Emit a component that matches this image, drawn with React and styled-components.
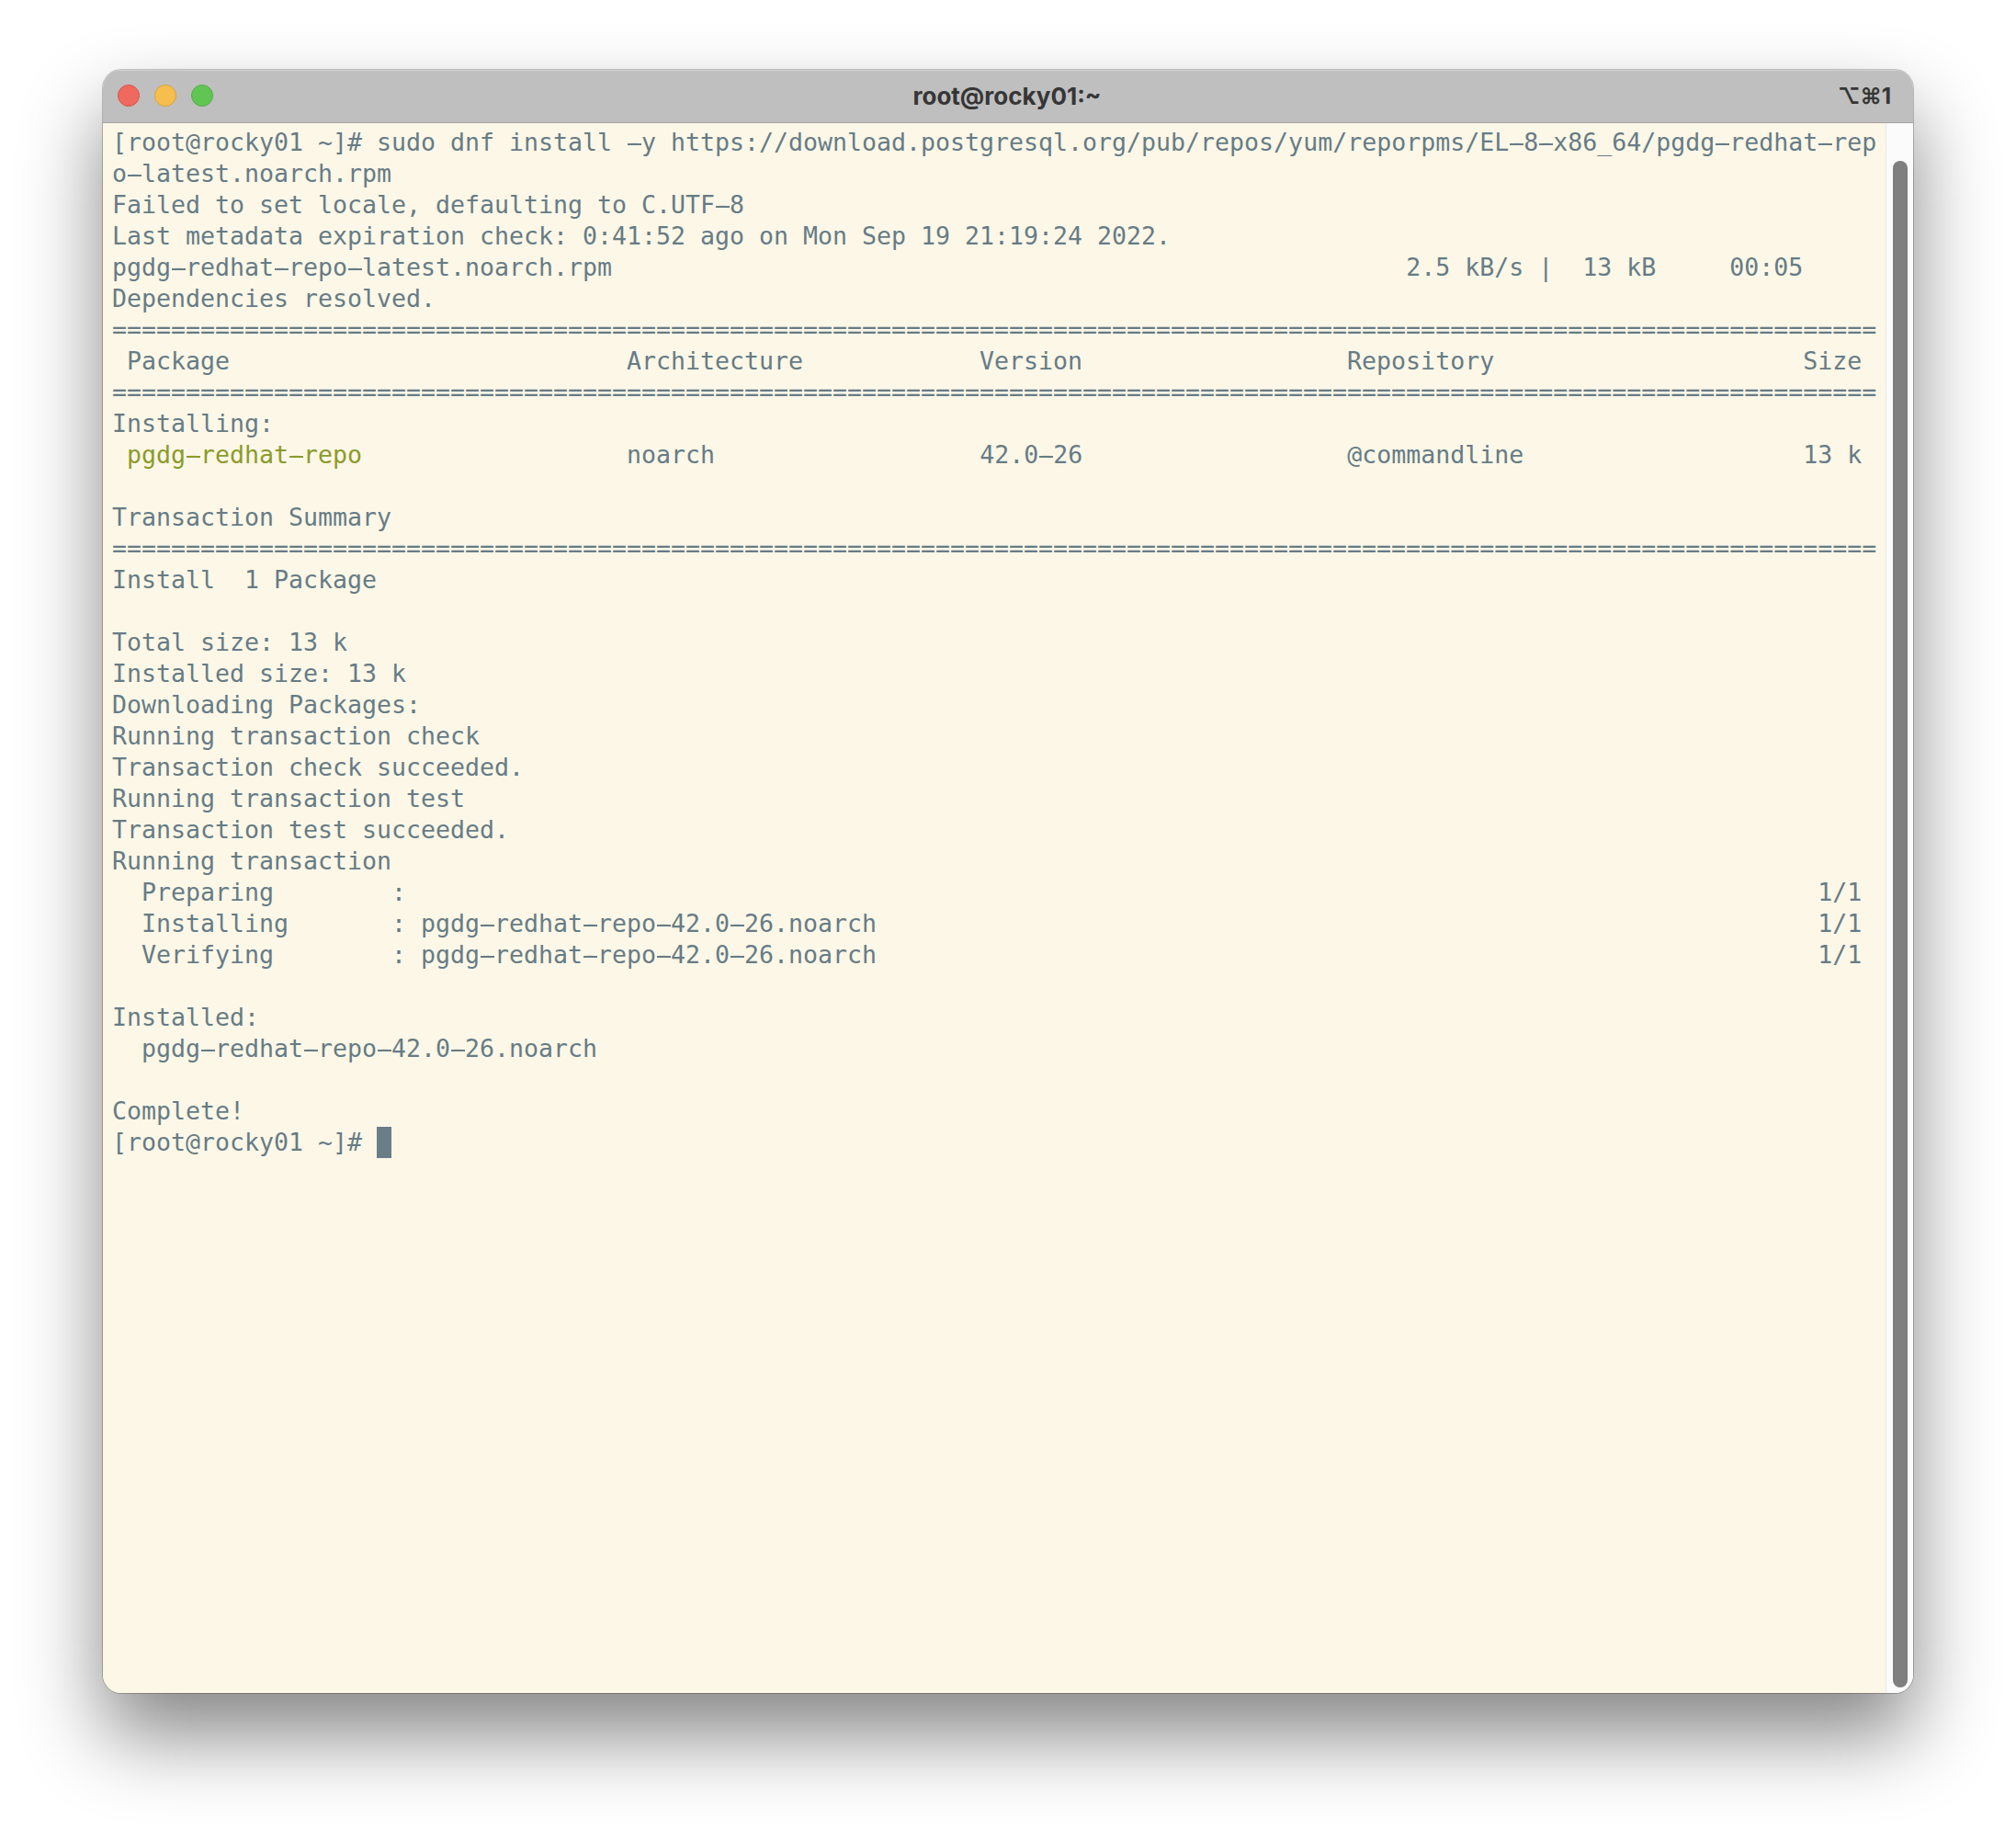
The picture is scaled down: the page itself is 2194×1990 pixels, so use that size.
import React from "react";
import styled, { createGlobalStyle } from "styled-components";

const Global = createGlobalStyle`
  html, body { margin: 0; padding: 0; background: #ffffff; }
`;

const Page = styled.div`
  width: 2194px;
  height: 1990px;
  box-sizing: border-box;
  padding: 76px 112px 0 112px;
  overflow: hidden;
`;

const Window = styled.div`
  width: 1970px;
  height: 1766px;
  display: flex;
  flex-direction: column;
  border-radius: 20px;
  overflow: hidden;
  box-shadow: 0 0 0 1px rgba(0, 0, 0, 0.22), 0 46px 88px rgba(0, 0, 0, 0.48);
  background: #fdf7e7;
`;

const TitleBar = styled.div`
  height: 58px;
  flex: none;
  display: grid;
  grid-template-columns: 1fr auto 1fr;
  align-items: center;
  padding: 0 18px 1px 16px;
  box-sizing: border-box;
  background: #bfbfbf;
  border-bottom: 1px solid #a3a3a3;
  box-shadow: inset 0 1px 0 #d4d4d4;
`;

const Lights = styled.div`
  display: flex;
  gap: 16px;
`;

const Light = styled.span`
  width: 24px;
  height: 24px;
  box-sizing: border-box;
  border-radius: 50%;
  background: ${(p) => p.$fill};
  border: 1px solid ${(p) => p.$edge};
`;

const Title = styled.div`
  font-family: Inter, "Liberation Sans", sans-serif;
  font-size: 26px;
  font-weight: 700;
  color: #363636;
`;

const Shortcut = styled.div`
  justify-self: end;
  padding-right: 6px;
  font-family: Inter, "DejaVu Sans", sans-serif;
  font-size: 24px;
  font-weight: 700;
  color: #363636;
  white-space: nowrap;
`;

const Body = styled.div`
  flex: 1;
  min-height: 0;
  display: flex;
`;

const Terminal = styled.pre`
  flex: 1;
  margin: 0;
  padding: 4px 0 0 10px;
  background: #fdf7e7;
  color: #667c86;
  font-family: "DejaVu Sans Mono", monospace;
  font-size: 26.58px;
  line-height: 34px;
  white-space: pre;
  overflow: hidden;
`;

const Line = styled.div`
  height: 34px;
`;

const Green = styled.span`
  color: #8b9b2c;
`;

const Hyphen = styled.span`
  display: inline-block;
  position: relative;
  width: 16px;

  &::after {
    content: "";
    position: absolute;
    left: 0.5px;
    top: 18px;
    width: 15px;
    height: 2px;
    background: currentColor;
  }
`;

const Cursor = styled.span`
  display: inline-block;
  width: 16px;
  height: 34px;
  background: #6a7e88;
  vertical-align: top;
`;

const Track = styled.div`
  width: 30px;
  flex: none;
  box-sizing: border-box;
  padding: 41px 6px 6px 7px;
  background: #fbfbfb;
  border-left: 1px solid #e8e8e8;
`;

const Thumb = styled.div`
  height: 100%;
  border-radius: 8px;
  background: #7f7f7f;
`;

const pad = (s, n) => s.padEnd(n, " ");
const rule = "=".repeat(120);

const Text = ({ children }) =>
  children.split("-").map((part, i) => (
    <React.Fragment key={i}>
      {i > 0 && <Hyphen>-</Hyphen>}
      {part}
    </React.Fragment>
  ));

const lines = [
  "[root@rocky01 ~]# sudo dnf install -y https://download.postgresql.org/pub/repos/yum/reporpms/EL-8-x86_64/pgdg-redhat-rep",
  "o-latest.noarch.rpm",
  "Failed to set locale, defaulting to C.UTF-8",
  "Last metadata expiration check: 0:41:52 ago on Mon Sep 19 21:19:24 2022.",
  pad("pgdg-redhat-repo-latest.noarch.rpm", 88) + "2.5 kB/s |  13 kB     00:05",
  "Dependencies resolved.",
  rule,
  " " + pad("Package", 34) + pad("Architecture", 24) + pad("Version", 25) + pad("Repository", 31) + "Size",
  rule,
  "Installing:",
  "GREEN",
  "",
  "Transaction Summary",
  rule,
  "Install  1 Package",
  "",
  "Total size: 13 k",
  "Installed size: 13 k",
  "Downloading Packages:",
  "Running transaction check",
  "Transaction check succeeded.",
  "Running transaction test",
  "Transaction test succeeded.",
  "Running transaction",
  pad("  Preparing        :", 116) + "1/1",
  pad("  Installing       : pgdg-redhat-repo-42.0-26.noarch", 116) + "1/1",
  pad("  Verifying        : pgdg-redhat-repo-42.0-26.noarch", 116) + "1/1",
  "",
  "Installed:",
  "  pgdg-redhat-repo-42.0-26.noarch",
  "",
  "Complete!",
];

export default function App() {
  return (
    <Page>
      <Global />
      <Window>
        <TitleBar>
          <Lights>
            <Light $fill="#f0695f" $edge="#d8554b" />
            <Light $fill="#f6bd4f" $edge="#dca23a" />
            <Light $fill="#61c554" $edge="#52ad45" />
          </Lights>
          <Title>root@rocky01:~</Title>
          <Shortcut>⌥⌘1</Shortcut>
        </TitleBar>
        <Body>
          <Terminal>
            {lines.map((text, i) =>
              text === "GREEN" ? (
                <Line key={i}>
                  {" "}
                  <Green>
                    <Text>pgdg-redhat-repo</Text>
                  </Green>
                  {" ".repeat(18) + pad("noarch", 24)}
                  <Text>{pad("42.0-26", 25)}</Text>
                  {pad("@commandline", 31) + "13 k"}
                </Line>
              ) : (
                <Line key={i}>
                  <Text>{text}</Text>
                </Line>
              )
            )}
            <Line>
              {"[root@rocky01 ~]# "}
              <Cursor />
            </Line>
          </Terminal>
          <Track>
            <Thumb />
          </Track>
        </Body>
      </Window>
    </Page>
  );
}
